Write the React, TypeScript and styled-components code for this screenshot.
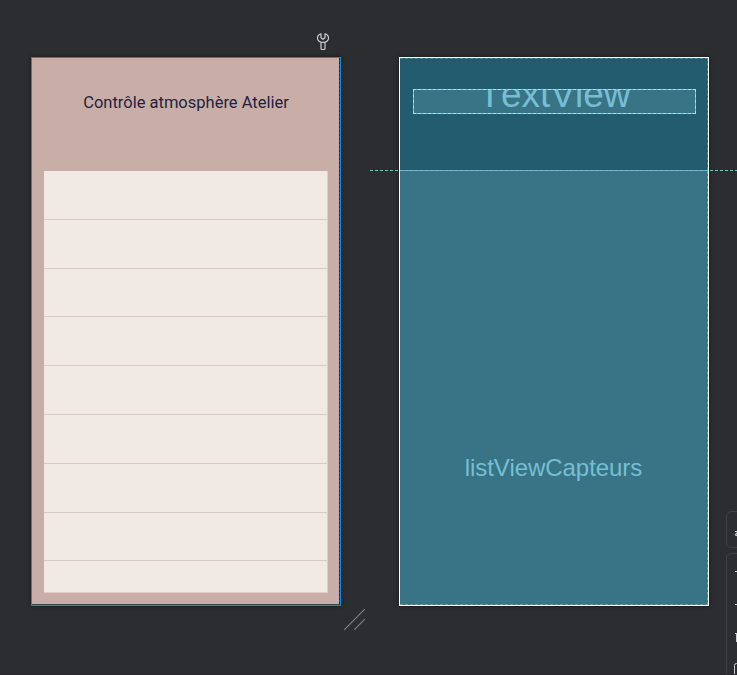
import React from 'react';
import styled, { createGlobalStyle } from 'styled-components';

const GlobalStyle = createGlobalStyle`
  * { box-sizing: border-box; }
  body { margin: 0; background: #2b2d30; overflow: hidden; }
`;

const Surface = styled.main`
  position: relative;
  display: flex;
  gap: 58px;
  width: 737px;
  height: 675px;
  padding-left: 31px;
  overflow: hidden;
  background: #2b2d30;
  border-bottom: 1px solid #2d282c;
`;

const Column = styled.section`
  display: flex;
  flex-direction: column;
  flex: none;
  width: 310px;
`;

const ColumnHeader = styled.div`
  display: flex;
  justify-content: flex-end;
  height: 57px;
  padding: 32px 10px 0 0;
`;

const Device = styled.div`
  display: flex;
  flex-direction: column;
  flex: none;
  height: 549px;
  padding: 0 1px 1px 0;
  border: 1px solid #1684f5;
  background: repeating-linear-gradient(180deg, #1b2a3c 0 2px, #394654 2px 4px);
  box-shadow: 0 0 4px rgba(0, 0, 0, 0.45);
`;

const Screen = styled.div`
  display: flex;
  flex-direction: column;
  flex: 1;
  padding: 0 11px 11px 12px;
  background: #c9aea7;
`;

const Title = styled.h1`
  flex: none;
  height: 113px;
  margin: 0;
  padding-top: 35px;
  font: 400 16.5px/20px Roboto, sans-serif;
  text-align: center;
  color: #221f43;
  white-space: nowrap;
`;

const SensorList = styled.div`
  display: grid;
  grid-template-rows: 49px 49px 48px 49px 49px 49px 49px 48px 1fr;
  flex: 1;
  background: #f1e9e4;
  border-right: 1px solid #ddceca;
  border-bottom: 1px solid #ddceca;
`;

const SensorRow = styled.div`
  border-bottom: 1px solid #d5cbc7;
  &:last-child { border-bottom: 0; }
`;

const HandleIcon = styled.svg`
  flex: none;
  margin: 3px 0 0 312px;
`;

const Blueprint = styled.div`
  display: flex;
  flex-direction: column;
  flex: none;
  height: 549px;
  border: 1px solid #fff;
  background: #235c6f;
  box-shadow: 0 0 4px rgba(0, 0, 0, 0.45);
`;

const BlueprintTop = styled.div`
  flex: none;
  height: 112px;
  padding: 30px 11px 0 13px;
  border: 1px dashed #4b8393;
  border-width: 1px 1px 0 0;
`;

const TextBox = styled.div`
  display: flex;
  align-items: center;
  justify-content: center;
  height: 25px;
  overflow: hidden;
  border: 1px dashed #a3e1ee;
  background: linear-gradient(#387386, #387386) padding-box, #6dbed2;
  color: #76bfd3;
  font: 37px/41px "Liberation Sans", Arial, sans-serif;
  font-kerning: none;

  span { margin-top: -14px; }
`;

const BlueprintList = styled.div`
  flex: 1;
  padding-top: 283px;
  border: 1px dashed #6997a4;
  border-top: 0;
  border-left: 0;
  background: #387386;
  color: #76bfd3;
  font: 24px/28px "Liberation Sans", Arial, sans-serif;
  letter-spacing: -0.05px;
  text-align: center;
`;

const Guide = styled.div`
  position: absolute;
  left: 370px;
  right: 0;
  top: 170px;
  height: 1px;
  background: repeating-linear-gradient(90deg, #78bfce 0 3px, transparent 3px 5px);
`;

const GuideInside = styled.div`
  flex: none;
  height: 1px;
  background: repeating-linear-gradient(90deg, #93d7e4 0 3px, #68b3c5 3px 5px);
`;

const FloatingTools = styled.aside`
  position: absolute;
  left: 726px;
  top: 511px;
  display: flex;
  flex-direction: column;
  gap: 5px;
`;

const ToolGroup = styled.div<{ $height: number }>`
  width: 42px;
  height: ${({ $height }) => $height}px;
  border: 1px solid #404145;
  border-radius: 5px;
  background: #2b2d30;

  svg { display: block; }
`;

const rows = Array.from({ length: 9 }, (_, index) => index);

function Wrench() {
  return (
    <svg width="16" height="20" viewBox="0 0 16 20" fill="none" stroke="#ced0d6" strokeWidth="1.2" strokeLinejoin="round">
      <path d="M6 1.8C3.8 2.5 2.5 4 2.5 6c0 2 1.2 3.5 3.5 4.3v6.2q0 1 1 1h2q1 0 1-1v-6.2c2.3-.8 3.5-2.3 3.5-4.3 0-2-1.3-3.5-3.5-4.2v4l-2 1.5-2-1.5z" />
      <path d="M6 10.3h4" />
    </svg>
  );
}

export default function App() {
  return (
    <>
      <GlobalStyle />
      <Surface>
        <Column>
          <ColumnHeader><Wrench /></ColumnHeader>
          <Device>
            <Screen>
              <Title>Contrôle atmosphère Atelier</Title>
              <SensorList>{rows.map((row) => <SensorRow key={row} />)}</SensorList>
            </Screen>
          </Device>
          <HandleIcon width="23" height="22" viewBox="0 0 23 22" stroke="#7e8082" strokeWidth="1.2">
            <path d="M1.2 20.8 21.8.2M11.2 20.8 21.8 10.2" />
          </HandleIcon>
        </Column>
        <Column>
          <ColumnHeader />
          <Blueprint>
            <BlueprintTop><TextBox><span>TextView</span></TextBox></BlueprintTop>
            <GuideInside />
            <BlueprintList>listViewCapteurs</BlueprintList>
          </Blueprint>
        </Column>
        <Guide />
        <FloatingTools>
          <ToolGroup $height={37}>
            <svg width="36" height="35" viewBox="0 0 36 35" fill="none" stroke="#ced0d6" strokeWidth="1.2">
              <path d="M8 19.5h4M8 22.2c1 1.5 2 1.5 3 1.3M9 22l2-2" />
            </svg>
          </ToolGroup>
          <ToolGroup $height={140}>
            <svg width="36" height="130" viewBox="0 0 36 130" fill="none" stroke="#ced0d6">
              <path d="M8 17.5h12M8 50.5h12" />
              <path d="M8 79.5h2.5v8M9.5 79v9" />
              <rect x="7.5" y="109.5" width="14" height="14" rx="2" />
            </svg>
          </ToolGroup>
        </FloatingTools>
      </Surface>
    </>
  );
}
